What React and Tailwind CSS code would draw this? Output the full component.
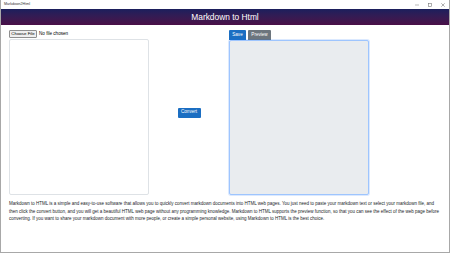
import React from "react";

const App = () => {
  return (
    <div
      className="w-[450px] h-[253px] flex flex-col bg-white border-x border-b border-[#a8a8a8] overflow-hidden"
      style={{ fontFamily: '"Liberation Sans", Arial, sans-serif' }}
    >
      {/* Window title bar */}
      <div className="h-[9px] flex items-center justify-between pl-[3px] pr-[4px]">
        <span className="text-[3.6px] text-[#333]">Markdown2Html</span>
        <div className="flex items-center gap-[9px] text-[#777]">
          <svg width="4" height="4" viewBox="0 0 4 4">
            <line x1="0" y1="2" x2="4" y2="2" stroke="currentColor" strokeWidth="0.5" />
          </svg>
          <svg width="4" height="4" viewBox="0 0 4 4">
            <rect x="0.4" y="0.4" width="3.2" height="3.2" fill="none" stroke="currentColor" strokeWidth="0.6" />
          </svg>
          <svg width="4" height="4" viewBox="0 0 4 4">
            <path d="M0.3 0.3 L3.7 3.7 M3.7 0.3 L0.3 3.7" stroke="currentColor" strokeWidth="0.6" />
          </svg>
        </div>
      </div>

      {/* Header */}
      <div className="h-[16px] flex items-center justify-center bg-gradient-to-b from-[#1b1f5d] to-[#4a0f48]">
        <h1 className="text-[8.4px] text-white leading-none">Markdown to Html</h1>
      </div>

      {/* Main */}
      <div className="flex-1 flex flex-col px-[8px] pt-[5px]">
        <div className="flex h-[165px]">
          {/* Left: markdown input */}
          <div className="w-[140px] flex flex-col gap-[1px]">
            <div className="h-[8px] flex items-center gap-[2px]">
              <button className="w-[28px] h-[8.5px] bg-[#efefef] border border-[#8f8f8f] rounded-[1px] text-[4.4px] text-black leading-none whitespace-nowrap">
                Choose File
              </button>
              <span className="text-[4.6px] text-black">No file chosen</span>
            </div>
            <textarea className="flex-1 resize-none border border-[#dee2e6] rounded-[2px] bg-white outline-none" />
          </div>

          {/* Middle: convert */}
          <div className="w-[80px] flex items-center justify-center">
            <button className="w-[23px] h-[10px] bg-[#1b6ec2] rounded-[1px] text-[4.6px] text-white leading-none">
              Convert
            </button>
          </div>

          {/* Right: preview */}
          <div className="w-[140px] flex flex-col">
            <div className="h-[10px] flex gap-[2px]">
              <button className="w-[17px] bg-[#1b6ec2] rounded-t-[1px] text-[4.6px] text-white leading-none">
                Save
              </button>
              <button className="w-[23px] bg-[#6c757d] rounded-t-[1px] text-[4.6px] text-white leading-none">
                Preview
              </button>
            </div>
            <div className="flex-1 bg-[#e9ecef] border border-[#9ec5fe] rounded-[2px] shadow-[0_0_0_1px_rgba(13,110,253,0.15)]" />
          </div>
        </div>

        <p className="mt-[5px] w-[434px] text-[4.5px] leading-[7.5px] text-[#212529]">
          Markdown to HTML is a simple and easy-to-use software that allows you to quickly convert markdown documents into HTML web pages. You just need to paste your markdown text or select your markdown file, and then click the convert button, and you will get a beautiful HTML web page without any programming knowledge. Markdown to HTML supports the preview function, so that you can see the effect of the web page before converting. If you want to share your markdown document with more people, or create a simple personal website, using Markdown to HTML is the best choice.
        </p>
      </div>
    </div>
  );
};

export default App;
